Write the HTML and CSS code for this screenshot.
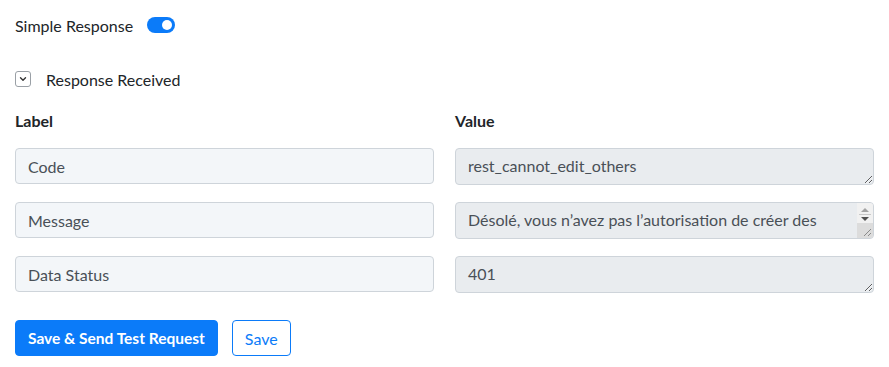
FILE: index.html
```html
<!DOCTYPE html>
<html lang="en">
<head>
    <meta charset="UTF-8">
    <meta name="viewport" content="width=device-width, initial-scale=1.0">
    <title>Response</title>
    <link rel="stylesheet" href="styles.css">
</head>
<body>
    <div class="panel">
        <div class="toggle-row">
            <span>Simple Response</span>
            <span class="switch"><span class="knob"></span></span>
        </div>

        <div class="collapse-row">
            <span class="chevron">
                <svg width="10" height="10" viewBox="0 0 10 10"><path d="M2.5 3.8 L5 6.3 L7.5 3.8" fill="none" stroke="#333" stroke-width="1.4" stroke-linecap="round" stroke-linejoin="round"/></svg>
            </span>
            <span>Response Received</span>
        </div>

        <div class="grid">
            <div class="head">Label</div>
            <div class="head">Value</div>

            <input class="field" type="text" value="Code" readonly>
            <textarea class="value" rows="1" disabled>rest_cannot_edit_others</textarea>

            <input class="field" type="text" value="Message" readonly>
            <div class="scroll-wrap">
                <textarea class="value scroll" rows="1" disabled>Désolé, vous n’avez pas l’autorisation de créer des contenus en tant que cet utilisateur.</textarea>
                <div class="fake-bar">
                    <div class="arrows">
                        <span class="up"></span>
                        <span class="sep"></span>
                        <span class="down"></span>
                    </div>
                    <div class="rest">
                        <svg width="9" height="9" viewBox="0 0 9 9"><path d="M8 1 L1 8 M8 5 L5 8" stroke="#8a8a8a" stroke-width="1"/></svg>
                    </div>
                </div>
            </div>

            <input class="field" type="text" value="Data Status" readonly>
            <textarea class="value" rows="1" disabled>401</textarea>
        </div>

        <div class="actions">
            <button class="btn primary">Save &amp; Send Test Request</button>
            <button class="btn outline">Save</button>
        </div>
    </div>
</body>
</html>
```

FILE: styles.css
```css
body {
    margin: 0;
    font-family: Lato, "Open Sans", sans-serif;
    font-size: 16px;
    color: #212529;
    background: #fff;
}

.panel {
    padding: 14px 15px 0 15px;
}

.toggle-row {
    display: flex;
    align-items: center;
    gap: 14px;
    height: 22px;
}

.switch {
    width: 28px;
    height: 16px;
    border-radius: 8px;
    background: #0b7bf9;
    position: relative;
}

.switch .knob {
    position: absolute;
    right: 3px;
    top: 3px;
    width: 10px;
    height: 10px;
    border-radius: 50%;
    background: #fff;
}

.collapse-row {
    display: flex;
    align-items: center;
    gap: 15px;
    margin-top: 32px;
    height: 22px;
}

.chevron {
    width: 14px;
    height: 14px;
    border: 1px solid #9aa0a6;
    border-radius: 3px;
    display: flex;
    align-items: center;
    justify-content: center;
}

.grid {
    display: grid;
    grid-template-columns: 419px 419px;
    column-gap: 21px;
    row-gap: 17px;
    margin-top: 21px;
    align-items: start;
}

.head {
    font-weight: bold;
    height: 20px;
    line-height: 20px;
}

.field,
.value {
    box-sizing: border-box;
    width: 100%;
    margin: 0;
    font-family: inherit;
    font-size: 16px;
    color: #495057;
    border: 1px solid #ced4da;
    border-radius: 4px;
    padding: 6px 12px;
    outline: none;
    display: block;
}

.field {
    height: 36px;
    background: #f3f6f9;
}

.value {
    height: 37px;
    line-height: 24px;
    padding-top: 5px;
    background: #e9ecef;
    resize: vertical;
    overflow: hidden;
}

.scroll-wrap {
    position: relative;
}

.value.scroll {
    resize: none;
    padding-right: 20px;
}

.fake-bar {
    position: absolute;
    top: 1px;
    right: 1px;
    bottom: 1px;
    width: 16px;
    display: flex;
    flex-direction: column;
    border-radius: 0 3px 3px 0;
    overflow: hidden;
}

.fake-bar .arrows {
    height: 20px;
    background: #f1f1f1;
    display: flex;
    flex-direction: column;
    align-items: center;
    padding-top: 5px;
    box-sizing: border-box;
}

.fake-bar .up {
    width: 0;
    height: 0;
    border-left: 4px solid transparent;
    border-right: 4px solid transparent;
    border-bottom: 4px solid #a3a3a3;
}

.fake-bar .sep {
    width: 12px;
    height: 1px;
    background: #c8c8c8;
    margin: 2px 0;
}

.fake-bar .down {
    width: 0;
    height: 0;
    border-left: 4px solid transparent;
    border-right: 4px solid transparent;
    border-top: 4px solid #505050;
}

.fake-bar .rest {
    flex: 1;
    background: #dcdcdc;
    display: flex;
    align-items: flex-end;
    justify-content: flex-end;
    padding: 0 1px 1px 0;
}

.actions {
    display: flex;
    gap: 14px;
    margin-top: 27px;
}

.btn {
    font-family: inherit;
    font-size: 16px;
    height: 36px;
    border-radius: 4px;
    padding: 0 12px;
    cursor: pointer;
}

.btn.primary {
    font-size: 15.5px;
    background: #0b7bf9;
    border: 1px solid #0b7bf9;
    color: #fff;
    font-weight: bold;
}

.btn.outline {
    background: #fff;
    border: 1px solid #0b7bf9;
    color: #0b7bf9;
}
```
